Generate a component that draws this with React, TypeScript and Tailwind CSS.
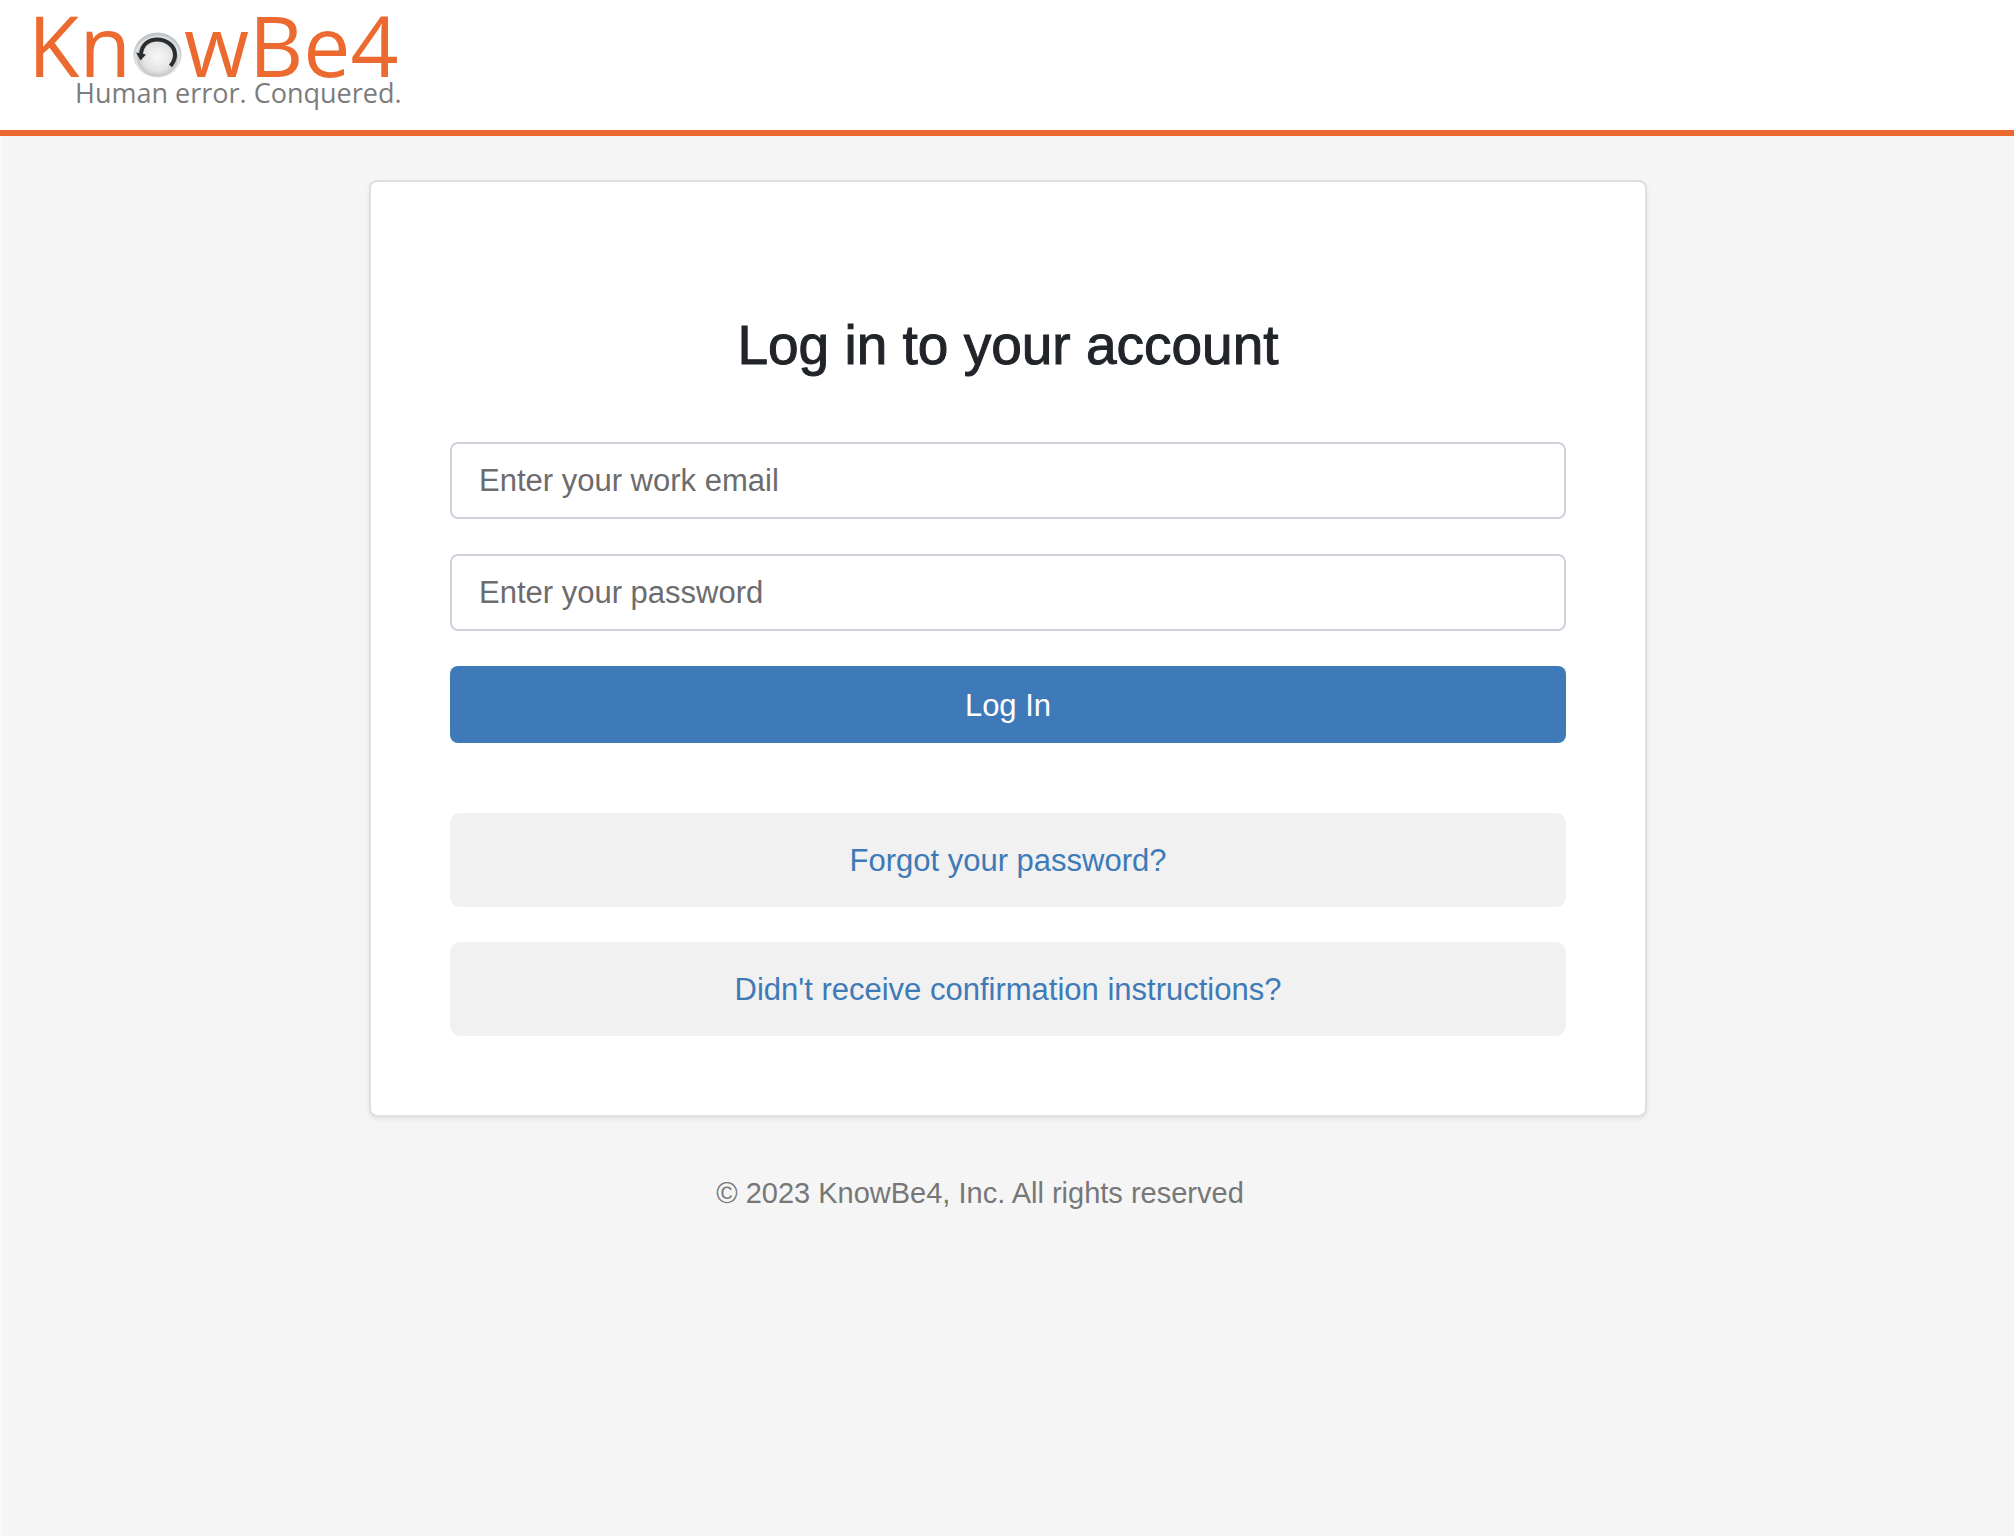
import React from "react";

function Logo() {
  return (
    <svg
      viewBox="0 0 366 94"
      className="h-[94px] w-[366px] overflow-visible"
      role="img"
      aria-label="KnowBe4 Human error. Conquered."
    >
      <defs>
        <radialGradient id="ball" cx="50%" cy="55%" r="50%">
          <stop offset="0%" stopColor="#f8f8f8" />
          <stop offset="60%" stopColor="#e4e4e4" />
          <stop offset="84%" stopColor="#c6c8ca" />
          <stop offset="90%" stopColor="#e6e8ea" />
          <stop offset="100%" stopColor="#c2c5c8" />
        </radialGradient>
      </defs>
      <g fill="#ec6a30" fontFamily="'Open Sans', sans-serif" fontSize="84">
        <text x="-7" y="61">Kn</text>
        <text x="149" y="61">wBe4</text>
      </g>
      <ellipse cx="122.500" cy="39" rx="24" ry="22.500" fill="url(#ball)" />
      <path
        d="M106 38C107 28 114 23.500 122 23.500C132 23.500 140 30 140 39C140 43.500 138 47 135.500 50"
        fill="none"
        stroke="#2b2e31"
        strokeWidth="4"
      />
      <path d="M101 36.500L111 38.500L105.500 44.500Z" fill="#2b2e31" />
      <text
        x="40"
        y="87"
        fill="#7c7c7c"
        fontFamily="'Open Sans', sans-serif"
        fontSize="27"
      >
        Human error. Conquered.
      </text>
    </svg>
  );
}

const fieldClass =
  "block h-[77px] w-full rounded-lg border-2 border-[#ced4da] bg-white px-[27px] text-[31px] text-[#212529] placeholder:text-[#6c6c6e] placeholder:opacity-100";

const linkClass =
  "flex h-[94px] items-center justify-center rounded-[10px] bg-[#f1f1f1] text-[#3d7ab7]";

export default function App() {
  return (
    <div className="flex min-h-screen flex-col border-l-2 border-[#f9f9f9] bg-[#f5f5f5] font-['Liberation_Sans',Arial,sans-serif] text-[31px] leading-[45px]">
      <header className="-ml-0.5 border-b-[6px] border-[#ec6a30] bg-white px-[35px] pt-4 pb-5">
        <a href="#" className="block w-fit">
          <Logo />
        </a>
      </header>

      <main className="mx-auto mt-11 w-full max-w-[1278px] rounded-lg border-2 border-[#dedfdf] bg-white px-[79px] pt-[131px] pb-[79px] shadow-[0_2px_4px_rgba(0,0,0,0.08)]">
        <h1 className="text-center text-[55px] leading-[64px] font-normal text-[#212529] [-webkit-text-stroke:1px_#212529]">
          Log in to your account
        </h1>
        <form className="mt-[65px] flex flex-col gap-[35px]">
          <input
            type="email"
            aria-label="Work email"
            placeholder="Enter your work email"
            className={fieldClass}
          />
          <input
            type="password"
            aria-label="Password"
            placeholder="Enter your password"
            className={fieldClass}
          />
          <button
            type="button"
            className="h-[77px] rounded-lg bg-[#3d7ab7] pt-0.5 text-white"
          >
            Log In
          </button>
        </form>
        <nav className="mt-[70px] flex flex-col gap-[35px]">
          <a href="#" className={linkClass}>
            Forgot your password?
          </a>
          <a href="#" className={linkClass}>
            Didn't receive confirmation instructions?
          </a>
        </nav>
      </main>

      <footer className="mx-auto mt-[54px] w-full max-w-[1278px] pr-14 text-center text-[29px] text-[#777777]">
        © 2023 KnowBe4, Inc. All rights reserved
      </footer>
    </div>
  );
}
